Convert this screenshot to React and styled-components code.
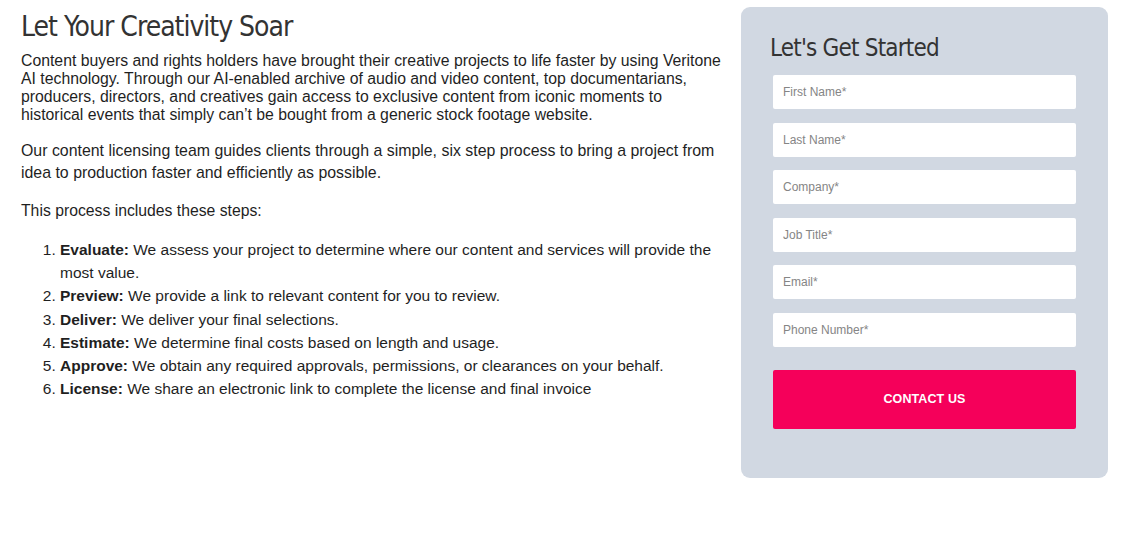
import React from 'react';
import styled, { createGlobalStyle } from 'styled-components';

/* ─── Global ─────────────────────────────────────────────────── */

const GlobalStyle = createGlobalStyle`
  html, body {
    margin: 0;
    padding: 0;
    background: #ffffff;
  }
  body {
    font-family: "Liberation Sans", Arial, Helvetica, sans-serif;
    color: #222222;
  }
`;

/* ─── Layout ─────────────────────────────────────────────────── */

const Page = styled.div`
  display: flex;
  align-items: flex-start;
  gap: 15px;
  padding: 7px 0 0 21px;
  width: 1108px;
  box-sizing: border-box;
`;

const Content = styled.section`
  flex: 0 0 705px;
`;

const Title = styled.h1`
  margin: 2px 0 7px;
  font-family: "DejaVu Sans Condensed", "DejaVu Sans", sans-serif;
  font-stretch: condensed;
  font-weight: 400;
  font-size: 28px;
  line-height: 36px;
  color: #333333;
  letter-spacing: -1px;
`;

const Para = styled.p`
  margin: 0 0 ${props => props.$mb || 14}px;
  font-size: ${props => props.$fs || 15}px;
  line-height: ${props => props.$lh || 18}px;
  color: #1f1f1f;
`;

const Steps = styled.ol`
  margin: 0;
  padding-left: 39px;
  font-size: 15.5px;
  line-height: 23.2px;
  color: #1f1f1f;
`;

const Step = styled.li`
  padding-left: 0;
`;

const Label = styled.strong`
  font-weight: 700;
`;

/* ─── Form panel ─────────────────────────────────────────────── */

const Panel = styled.aside`
  flex: 0 0 367px;
  height: 471px;
  box-sizing: border-box;
  background: #d1d8e2;
  border-radius: 9px;
  padding: 25px 32px 0 29px;
`;

const PanelTitle = styled.h2`
  margin: 0 0 11px;
  font-family: "DejaVu Sans Condensed", "DejaVu Sans", sans-serif;
  font-stretch: condensed;
  font-weight: 400;
  font-size: 24px;
  line-height: 32px;
  letter-spacing: -0.8px;
  color: #333333;
`;

const Form = styled.form`
  display: flex;
  flex-direction: column;
  gap: 13.6px;
  padding-left: 3px;
`;

const Input = styled.input`
  height: 34px;
  box-sizing: border-box;
  border: none;
  border-radius: 2px;
  background: #ffffff;
  padding: 0 10px;
  font-family: "Liberation Sans", Arial, sans-serif;
  font-size: 12px;
  color: #333;
  outline: none;

  &::placeholder { color: #858585; }
`;

const Submit = styled.button`
  margin-top: 9px;
  height: 59px;
  border: none;
  border-radius: 2px;
  background: #f5005a;
  color: #ffffff;
  font-family: "Liberation Sans", Arial, sans-serif;
  font-size: 12.5px;
  font-weight: 700;
  letter-spacing: 0.1px;
  cursor: pointer;
`;

/* ─── Data ───────────────────────────────────────────────────── */

const steps = [
  ['Evaluate:', 'We assess your project to determine where our content and services will provide the most value.'],
  ['Preview:', 'We provide a link to relevant content for you to review.'],
  ['Deliver:', 'We deliver your final selections.'],
  ['Estimate:', 'We determine final costs based on length and usage.'],
  ['Approve:', 'We obtain any required approvals, permissions, or clearances on your behalf.'],
  ['License:', 'We share an electronic link to complete the license and final invoice'],
];

const fields = ['First Name*', 'Last Name*', 'Company*', 'Job Title*', 'Email*', 'Phone Number*'];

/* ─── Component ──────────────────────────────────────────────── */

export default function App() {
  return (
    <>
      <GlobalStyle />
      <Page>
        <Content>
          <Title>Let Your Creativity Soar</Title>
          <Para $fs={15.8} $mb={16}>
            Content buyers and rights holders have brought their creative projects to life faster by using Veritone
            AI technology. Through our AI-enabled archive of audio and video content, top documentarians,
            producers, directors, and creatives gain access to exclusive content from iconic moments to
            historical events that simply can’t be bought from a generic stock footage website.
          </Para>
          <Para $fs={15.9} $lh={22} $mb={16}>
            Our content licensing team guides clients through a simple, six step process to bring a project from
            idea to production faster and efficiently as possible.
          </Para>
          <Para $fs={15.75} $lh={22} $mb={16}>This process includes these steps:</Para>
          <Steps>
            {steps.map(([label, text]) => (
              <Step key={label}>
                <Label>{label}</Label> {text}
              </Step>
            ))}
          </Steps>
        </Content>

        <Panel>
          <PanelTitle>Let's Get Started</PanelTitle>
          <Form onSubmit={e => e.preventDefault()}>
            {fields.map(f => (
              <Input key={f} placeholder={f} />
            ))}
            <Submit type="submit">CONTACT US</Submit>
          </Form>
        </Panel>
      </Page>
    </>
  );
}
